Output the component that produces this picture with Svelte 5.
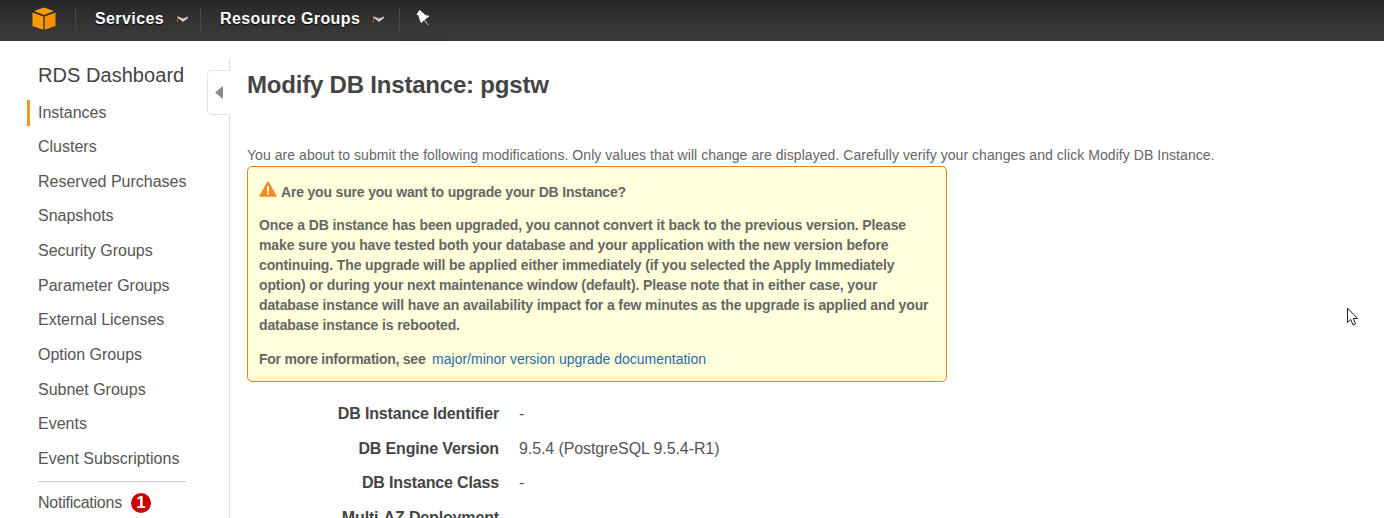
<script lang="ts">
  const navItems = [
    'Instances',
    'Clusters',
    'Reserved Purchases',
    'Snapshots',
    'Security Groups',
    'Parameter Groups',
    'External Licenses',
    'Option Groups',
    'Subnet Groups',
    'Events',
    'Event Subscriptions'
  ];

  const details = [
    { label: 'DB Instance Identifier', value: '-' },
    { label: 'DB Engine Version', value: '9.5.4 (PostgreSQL 9.5.4-R1)' },
    { label: 'DB Instance Class', value: '-' },
    { label: 'Multi-AZ Deployment', value: '' }
  ];
</script>

<div class="page">
  <header class="topbar">
    <div class="logo">
      <svg width="24" height="23" viewBox="0 0 24 23">
        <path d="M0.500 5.500 L11.300 9.500 V22.800 L0.500 19 Z" fill="#f90" />
        <path d="M23.500 5.500 L12.700 9.500 V22.800 L23.500 19 Z" fill="#f59000" />
        <path d="M2 4 L12 0.500 L22 4 L12 8 Z" fill="#f90" />
      </svg>
    </div>
    <div class="tab services">
      <span>Services</span>
      <svg class="caret" width="11" height="6" viewBox="0 0 11 6"><rect x="0" y="0" width="1" height="6" fill="#a8672a" /><path d="M1 0.500 L6 2.500 L11 0.500 V2 L6 6 L1 2 Z" fill="#ccc" /></svg>
    </div>
    <div class="tab groups">
      <span>Resource Groups</span>
      <svg class="caret" width="11" height="6" viewBox="0 0 11 6"><rect x="0" y="0" width="1" height="6" fill="#a8672a" /><path d="M1 0.500 L6 2.500 L11 0.500 V2 L6 6 L1 2 Z" fill="#ccc" /></svg>
    </div>
    <div class="pin">
      <svg width="14" height="16" viewBox="0 0 14 16">
        <path d="M3.500 0 L0.500 4.500 L2.500 5.500 L3.500 9.500 L5 13 L8.500 10 L13.500 6 L9.500 5 Z" fill="#fff" />
        <path d="M8.500 10 L12 15" stroke="#ccc" stroke-width="1" />
      </svg>
    </div>
  </header>

  <div class="body">
    <aside class="sidebar">
      <h2>RDS Dashboard</h2>
      <ul>
        {#each navItems as item, i}
          <li class:active={i === 0}>{item}</li>
        {/each}
      </ul>
      <div class="divider"></div>
      <div class="notifications"><span class="notif-label">Notifications</span> <span class="badge">1</span></div>
      <button class="collapse" aria-label="Collapse">
        <svg width="8" height="13" viewBox="0 0 8 13"><path d="M8 0 V13 L0 6.500 Z" fill="#888" /></svg>
      </button>
    </aside>

    <main>
      <h1>Modify DB Instance: pgstw</h1>
      <p class="intro">You are about to submit the following modifications. Only values that will change are displayed. Carefully verify your changes and click Modify DB Instance.</p>

      <section class="warning">
        <div class="warning-title">
          <svg width="18" height="16" viewBox="0 0 18 16">
            <path d="M9 1 L17 15 H1 Z" fill="#f58b1f" stroke="#f58b1f" stroke-width="1.500" stroke-linejoin="round" />
            <rect x="8" y="5" width="2" height="5.500" fill="#fff" />
            <rect x="8" y="11.500" width="2" height="2" fill="#fff" />
          </svg>
          <span>Are you sure you want to upgrade your DB Instance?</span>
        </div>
        <p>Once a DB instance has been upgraded, you cannot convert it back to the previous version. Please make sure you have tested both your database and your application with the new version before continuing. The upgrade will be applied either immediately (if you selected the Apply Immediately option) or during your next maintenance window (default). Please note that in either case, your database instance will have an availability impact for a few minutes as the upgrade is applied and your database instance is rebooted.</p>
        <p class="more">For more information, see <a href="#docs">major/minor version upgrade documentation</a></p>
      </section>

      <dl>
        {#each details as row}
          <dt>{row.label}</dt>
          <dd>{row.value}</dd>
        {/each}
      </dl>
    </main>
  </div>

  <svg class="cursor" width="13" height="20" viewBox="0 0 13 20">
    <path d="M1.500 1 V15.500 L4.800 12.500 L7 18 L9.500 17 L7.300 11.500 H11.500 Z" fill="#fff" stroke="#222" stroke-width="1" />
  </svg>
</div>

<style>
  :global(body) {
    margin: 0;
    background: #fff;
    overflow: hidden;
  }
  .page {
    position: relative;
    height: 518px;
    overflow: hidden;
    font-family: "Liberation Sans", Arial, sans-serif;
    color: #444;
  }
  .topbar {
    height: 41px;
    display: flex;
    align-items: center;
    background: linear-gradient(#262626 0%, #333 50%, #3a3a3a 100%);
    box-sizing: border-box;
  }
  .logo {
    width: 76px;
    height: 23px;
    box-sizing: border-box;
    padding-left: 32px;
    margin-top: -5px;
    border-right: 1px solid #484848;
  }
  .tab {
    height: 23px;
    display: flex;
    align-items: center;
    margin-top: -3px;
    color: #fff;
    font-size: 16px;
    font-weight: bold;
    letter-spacing: 0.4px;
    text-shadow: 0 1px 1px #000;
    box-sizing: border-box;
  }
  .services {
    width: 125px;
    padding-left: 19px;
    border-right: 1px solid #484848;
  }
  .groups {
    width: 199px;
    padding-left: 19px;
    border-right: 1px solid #484848;
  }
  .caret {
    margin-left: 13px;
    margin-top: 0;
  }
  .pin {
    align-self: stretch;
    width: 46px;
    box-sizing: border-box;
    padding: 10px 0 0 16px;
    background: linear-gradient(transparent 78%, rgba(0, 0, 0, 0.1));
  }
  .body {
    display: flex;
  }
  .sidebar {
    position: relative;
    width: 230px;
    flex: none;
    box-sizing: border-box;
    margin-top: 18px;
    height: 459px;
    padding: 4px 0 0 38px;
    border-right: 1px solid #ddd;
  }
  .sidebar h2 {
    margin: 0;
    font-size: 20px;
    font-weight: normal;
    line-height: 24px;
    letter-spacing: 0.05px;
    color: #444;
  }
  ul {
    list-style: none;
    margin: 8.510px 0 0;
    padding: 0;
  }
  li {
    position: relative;
    height: 34.660px;
    line-height: 34px;
    font-size: 16px;
    color: #555;
  }
  li.active::before {
    content: "";
    position: absolute;
    left: -11px;
    top: 4px;
    width: 3px;
    height: 26px;
    background: #f7941e;
  }
  .divider {
    width: 148px;
    height: 1px;
    background: #ccc;
    margin-top: 4.200px;
  }
  .notifications {
    display: flex;
    align-items: center;
    gap: 9px;
    height: 42px;
    font-size: 16px;
    color: #555;
  }
  .notif-label {
    letter-spacing: -0.25px;
  }
  .badge {
    width: 20px;
    height: 20px;
    border-radius: 50%;
    background: #c00;
    color: #fff;
    font-size: 17px;
    font-weight: bold;
    line-height: 20px;
    text-align: center;
  }
  .collapse {
    position: absolute;
    top: 11px;
    right: -1px;
    width: 23px;
    height: 45px;
    padding: 0;
    border: 1px solid #e4e4e4;
    border-right: 1px solid #fff;
    border-radius: 5px 0 0 5px;
    background: #fff;
    display: flex;
    align-items: center;
    justify-content: center;
  }
  main {
    flex: 1;
    padding: 0 0 0 17px;
  }
  h1 {
    margin: 30px 0 0;
    font-size: 24px;
    line-height: 28px;
    font-weight: bold;
    letter-spacing: -0.2px;
    color: #444;
  }
  .intro {
    margin: 47px 0 0;
    font-size: 14px;
    line-height: 18px;
    letter-spacing: 0.055px;
    color: #666;
  }
  .warning {
    width: 700px;
    height: 216px;
    box-sizing: border-box;
    margin-top: 2px;
    padding: 15px 11px 0;
    background: #ffffdc;
    border: 1px solid #e8811a;
    border-radius: 5px;
    font-size: 14px;
    font-weight: bold;
    letter-spacing: -0.125px;
    line-height: 20px;
    color: #666;
  }
  .warning-title {
    display: flex;
    gap: 4px;
    align-items: flex-start;
    height: 20px;
    letter-spacing: -0.18px;
  }
  .warning-title svg {
    margin-top: -1px;
  }
  .warning p {
    margin: 13px 0 0;
  }
  .warning .more {
    margin-top: 14px;
    letter-spacing: -0.25px;
  }
  .warning a {
    margin-left: 3px;
    color: #2a6ba8;
    font-weight: normal;
    letter-spacing: 0;
    text-decoration: none;
  }
  dl {
    display: grid;
    grid-template-columns: 252px 1fr;
    column-gap: 20px;
    grid-auto-rows: 34.600px;
    margin: 15px 0 0;
    font-size: 16px;
    line-height: 34px;
  }
  dt {
    text-align: right;
    font-weight: bold;
    letter-spacing: -0.15px;
    color: #444;
  }
  dd {
    margin: 0;
    letter-spacing: -0.1px;
    color: #555;
  }
  .cursor {
    position: absolute;
    left: 1346px;
    top: 307px;
  }
</style>
